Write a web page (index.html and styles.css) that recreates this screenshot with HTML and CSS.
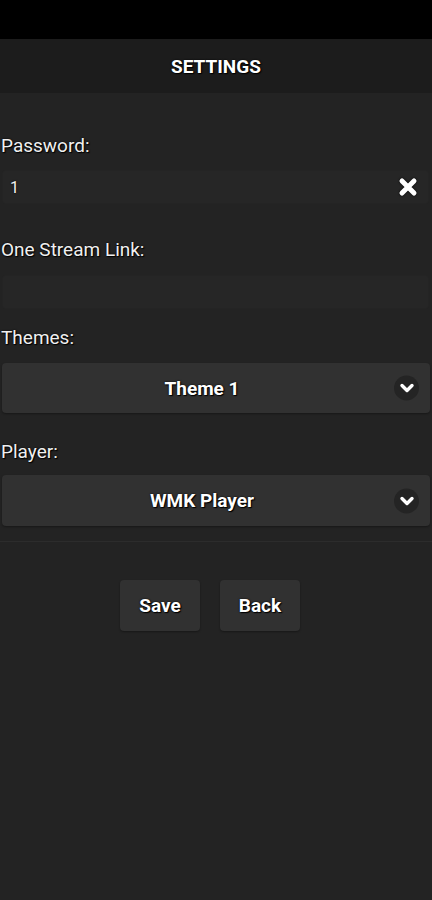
FILE: index.html
```html
<!DOCTYPE html>
<html>
<head>
<meta charset="utf-8">
<link rel="stylesheet" href="styles.css">
</head>
<body>
<div class="status"></div>
<header class="header">SETTINGS</header>
<main class="form">
  <div class="field">
    <label class="label">Password:</label>
    <div class="input">
      <span class="value">1</span>
      <svg class="clear" width="20" height="20" viewBox="0 0 20 20"><path d="M4 4 L16 16 M16 4 L4 16" stroke="#fff" stroke-width="5" stroke-linecap="round"/></svg>
    </div>
  </div>
  <div class="field">
    <label class="label">One Stream Link:</label>
    <div class="input"></div>
  </div>
  <div class="field">
    <label class="label">Themes:</label>
    <div class="select">
      <span class="select-text">Theme 1</span>
      <span class="chev"><svg width="16" height="11" viewBox="0 0 16 11"><path d="M3 3 L8 8 L13 3" fill="none" stroke="#fff" stroke-width="3.4" stroke-linecap="round" stroke-linejoin="round"/></svg></span>
    </div>
  </div>
  <div class="field">
    <label class="label">Player:</label>
    <div class="select player">
      <span class="select-text">WMK Player</span>
      <span class="chev"><svg width="16" height="11" viewBox="0 0 16 11"><path d="M3 3 L8 8 L13 3" fill="none" stroke="#fff" stroke-width="3.4" stroke-linecap="round" stroke-linejoin="round"/></svg></span>
    </div>
  </div>
</main>
<div class="buttons">
  <button class="btn">Save</button>
  <button class="btn">Back</button>
</div>
</body>
</html>
```
FILE: styles.css
```css
html, body {
  margin: 0;
  padding: 0;
}
body {
  background: #232323;
  width: 432px;
  height: 900px;
  font-family: Roboto, "Liberation Sans", sans-serif;
  color: #f2f2f2;
}
.status {
  height: 39px;
  background: #000;
}
.header {
  height: 54px;
  background: #1c1c1c;
  display: flex;
  align-items: center;
  justify-content: center;
  font-weight: 700;
  font-size: 19px;
  color: #fff;
  text-shadow: 0 0 2px #000, 1px 1px 1px #000;
}
.form {
  padding: 42px 0 15px 0;
  border-bottom: 1px solid #2c2c2c;
}
.field {
  display: flex;
  flex-direction: column;
}
.label {
  font-size: 19px;
  padding-left: 1px;
  line-height: 22px;
  text-shadow: 0 0 2px #000, 1px 1px 1px #000;
  color: #f0f0f0;
}
.field:nth-child(1) .input { margin-top: 13px; margin-bottom: 35px; }
.field:nth-child(2) .input { margin-top: 14px; margin-bottom: 18px; }
.field:nth-child(3) .select { margin-top: 14px; margin-bottom: 28px; }
.field:nth-child(4) .select { margin-top: 12px; }
.input {
  height: 34px;
  margin: 0 3px 0 2px;
  background: #262626;
  border: 1px solid #242424;
  border-radius: 3px;
  display: flex;
  align-items: center;
  justify-content: space-between;
  box-sizing: border-box;
  padding: 0 10px 0 7px;
}
.value {
  font-size: 16px;
  text-shadow: 0 0 2px #000;
}
.clear {
  filter: drop-shadow(0 0 1px #000);
}
.select {
  height: 50px;
  margin: 0 2px;
  background: #313131;
  border-radius: 4px;
  position: relative;
  display: flex;
  align-items: center;
  justify-content: center;
  padding-right: 28px;
  box-shadow: 0 1px 2px rgba(0,0,0,0.35);
}
.select.player {
  height: 51px;
}
.select-text {
  font-weight: 700;
  font-size: 19px;
  color: #fff;
  text-shadow: 0 0 2px #000, 1px 1px 1px #000;
}
.chev {
  position: absolute;
  right: 11px;
  top: 50%;
  transform: translateY(-50%);
  width: 25px;
  height: 25px;
  border-radius: 50%;
  background: #242424;
  display: flex;
  align-items: center;
  justify-content: center;
}
.buttons {
  display: flex;
  justify-content: center;
  gap: 20px;
  margin-top: 38px;
  padding-right: 12px;
}
.btn {
  width: 80px;
  height: 51px;
  background: #313131;
  border: none;
  border-radius: 4px;
  color: #fff;
  font-family: Roboto, "Liberation Sans", sans-serif;
  font-weight: 700;
  font-size: 19px;
  text-shadow: 0 0 2px #000, 1px 1px 1px #000;
  padding: 0;
  box-shadow: 0 1px 2px rgba(0,0,0,0.35);
}
```
